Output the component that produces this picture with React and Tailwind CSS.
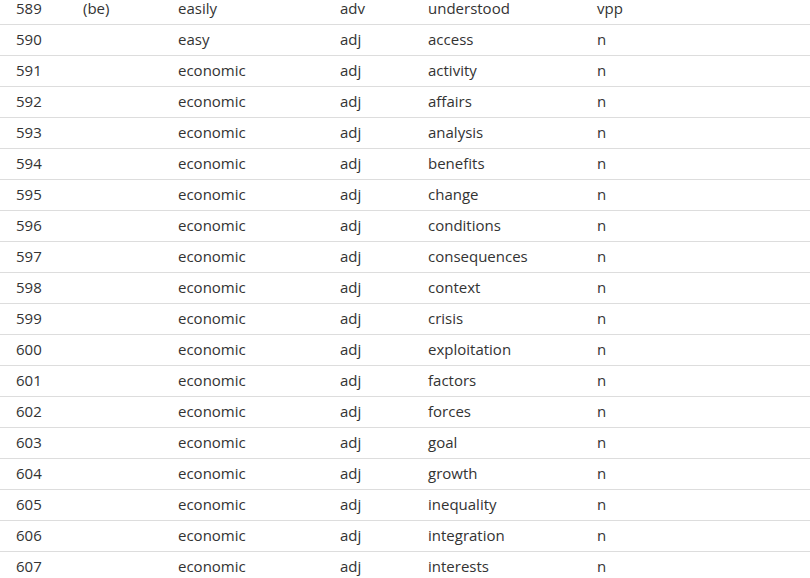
const rows = [
  ["589", "(be)", "easily", "adv", "understood", "vpp"],
  ["590", "", "easy", "adj", "access", "n"],
  ["591", "", "economic", "adj", "activity", "n"],
  ["592", "", "economic", "adj", "affairs", "n"],
  ["593", "", "economic", "adj", "analysis", "n"],
  ["594", "", "economic", "adj", "benefits", "n"],
  ["595", "", "economic", "adj", "change", "n"],
  ["596", "", "economic", "adj", "conditions", "n"],
  ["597", "", "economic", "adj", "consequences", "n"],
  ["598", "", "economic", "adj", "context", "n"],
  ["599", "", "economic", "adj", "crisis", "n"],
  ["600", "", "economic", "adj", "exploitation", "n"],
  ["601", "", "economic", "adj", "factors", "n"],
  ["602", "", "economic", "adj", "forces", "n"],
  ["603", "", "economic", "adj", "goal", "n"],
  ["604", "", "economic", "adj", "growth", "n"],
  ["605", "", "economic", "adj", "inequality", "n"],
  ["606", "", "economic", "adj", "integration", "n"],
  ["607", "", "economic", "adj", "interests", "n"],
];

export default function App() {
  return (
    <div className="w-[810px] h-[578px] overflow-hidden bg-white text-[#333] text-[15px] font-['Open_Sans',sans-serif]">
      <div className="-mt-[6px]">
        {rows.map((r) => (
          <div
            key={r[0]}
            className="grid grid-cols-[67px_95px_162px_88px_169px_1fr] pl-4 pb-[2px] h-[31px] items-center border-b border-[#ddd]"
          >
            {r.map((c, i) => (
              <div key={i} className="leading-none">{c}</div>
            ))}
          </div>
        ))}
      </div>
    </div>
  );
}
